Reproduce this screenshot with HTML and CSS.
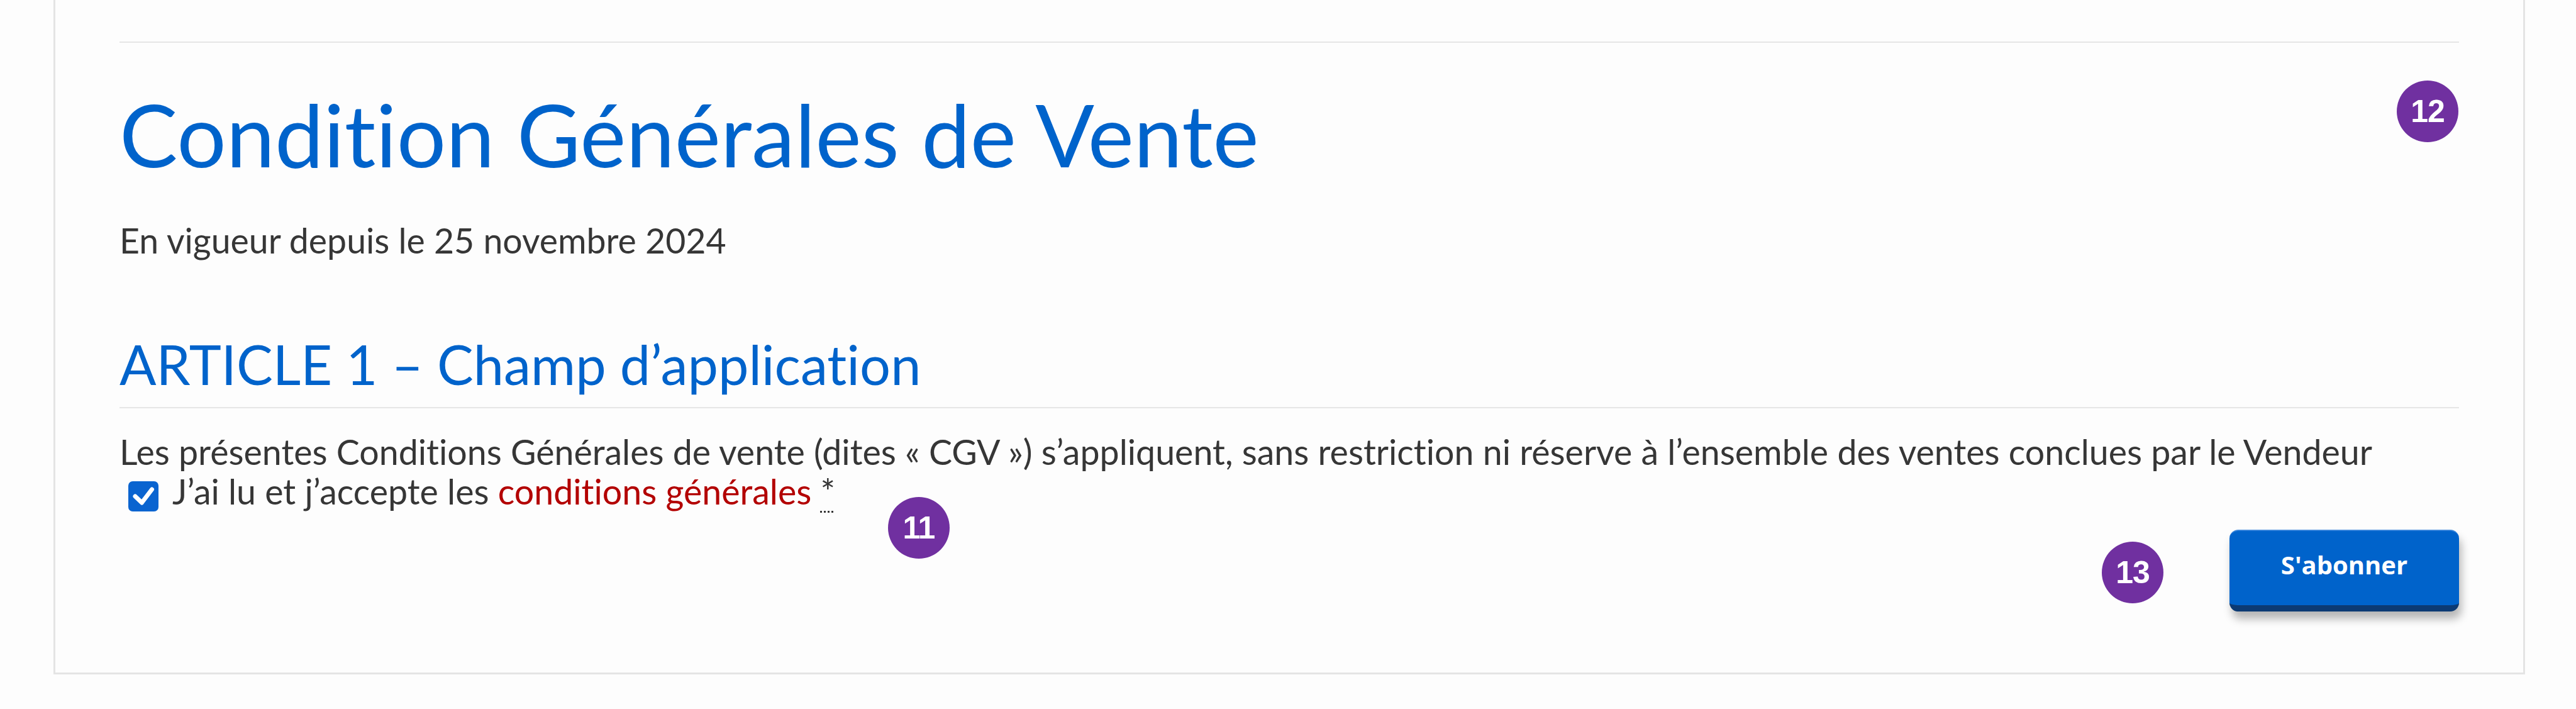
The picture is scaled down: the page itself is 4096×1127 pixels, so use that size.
FILE: index.html
```html
<!DOCTYPE html>
<html lang="fr">
<head>
<meta charset="utf-8">
<title>Condition Générales de Vente</title>
<link rel="stylesheet" href="styles.css">
</head>
<body>
<main class="card">
  <div class="rule"></div>
  <h1 class="title">Condition Générales de Vente</h1>
  <p class="date">En vigueur depuis le 25 novembre 2024</p>
  <h2 class="article">ARTICLE 1 – Champ d’application</h2>
  <p class="text">Les présentes Conditions Générales de vente (dites « CGV ») s’appliquent, sans restriction ni réserve à l’ensemble des ventes conclues par le Vendeur</p>
  <label class="accept">
    <span class="checkbox"><svg viewBox="0 0 48 48" width="48" height="48"><path d="M11 24 L21.5 34 L37.5 13" fill="none" stroke="#fff" stroke-width="7" stroke-linecap="round" stroke-linejoin="round"/></svg></span>
    <span class="accept-text">J’ai lu et j’accepte les <a class="link" href="#">conditions générales</a> <abbr class="req" title="obligatoire">*</abbr></span>
  </label>
  <div class="actions">
    <button class="btn" type="button">S'abonner</button>
  </div>
  <span class="badge badge-11">11</span>
  <span class="badge badge-12">12</span>
  <span class="badge badge-13">13</span>
</main>
</body>
</html>
```
FILE: styles.css
```css
html, body {
  margin: 0;
  padding: 0;
  background: #fdfdfd;
}

body {
  font-family: "Lato", "Liberation Sans", sans-serif;
  font-variant-ligatures: none;
  font-feature-settings: "liga" 0, "clig" 0;
  color: #363636;
}

.card {
  position: relative;
  box-sizing: border-box;
  width: 3930px;
  margin-left: 85px;
  padding: 66px 102px 97px;
  background: #fdfdfd;
  border: 3px solid #e4e4e4;
  border-top: none;
}

.rule {
  border-top: 2px solid #e6e6e6;
}

.title {
  margin: 62px 0 0;
  font-size: 138.5px;
  line-height: 165px;
  font-weight: 400;
  color: #0063cb;
}

.date {
  margin: 46px 0 0;
  font-size: 55.4px;
  line-height: 82px;
}

.article {
  margin: 104px 0 0;
  padding-bottom: 17px;
  border-bottom: 2px solid #e6e6e6;
  font-size: 86.5px;
  line-height: 103px;
  font-weight: 400;
  color: #0063cb;
}

.text {
  margin: 37px 0 0;
  font-size: 55.5px;
  line-height: 63px;
}

.accept {
  display: flex;
  align-items: flex-start;
  gap: 22px;
  font-size: 55.5px;
  line-height: 63px;
}

.checkbox {
  flex: none;
  width: 48px;
  height: 48px;
  margin: 16px 0 0 14px;
  border-radius: 7px;
  background: #0a64d0;
}

.checkbox svg {
  display: block;
}

.link {
  color: #b30000;
  text-decoration: none;
}

.req {
  color: #363636;
  text-decoration: underline dotted;
  text-underline-offset: 10px;
  text-decoration-thickness: 3px;
}

.actions {
  display: flex;
  justify-content: flex-end;
  margin-top: 29px;
}

.btn {
  box-sizing: border-box;
  width: 365px;
  height: 130px;
  padding: 0 0 10px;
  border: none;
  border-top: 2px solid #3a86dc;
  border-bottom: 10px solid #0c3a73;
  border-radius: 14px;
  background: #0063cb;
  color: #fff;
  font-family: "Open Sans", "Lato", sans-serif;
  font-weight: 700;
  font-size: 40px;
  line-height: 108px;
  box-shadow: 4px 12px 14px rgba(0, 0, 0, 0.28);
}

.badge {
  position: absolute;
  width: 98px;
  height: 98px;
  border-radius: 50%;
  background: #7030a0;
  color: #fff;
  font-family: "Liberation Sans", Arial, sans-serif;
  font-weight: 700;
  font-size: 50px;
  letter-spacing: -1px;
  display: flex;
  align-items: center;
  justify-content: center;
}

.badge-11 { left: 1324px; top: 790px; }
.badge-12 { left: 3723px; top: 128px; }
.badge-13 { left: 3254px; top: 861px; }
```
